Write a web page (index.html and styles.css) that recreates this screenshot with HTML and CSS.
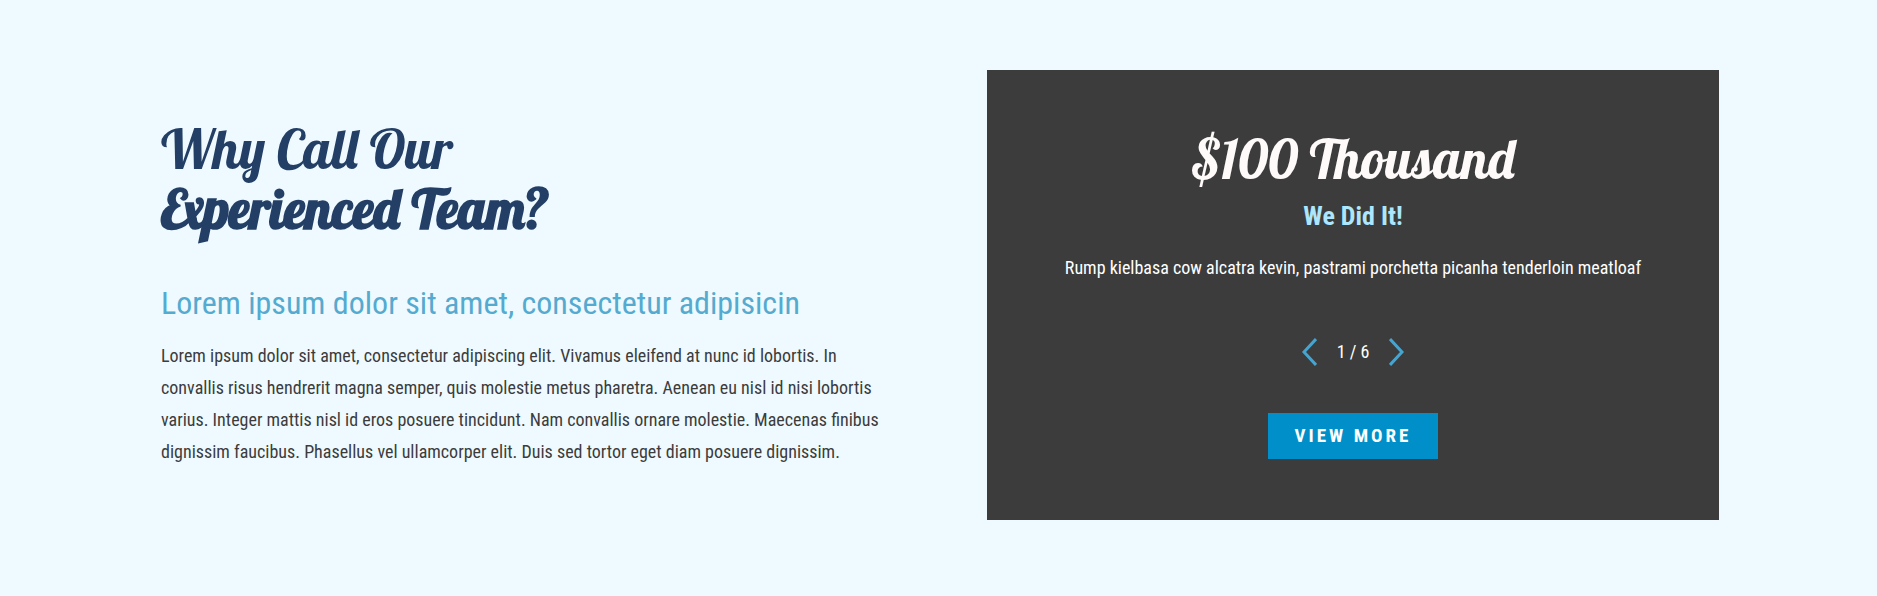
FILE: index.html
```html
<!DOCTYPE html>
<html lang="en">
<head>
<meta charset="utf-8">
<meta name="viewport" content="width=device-width, initial-scale=1">
<title>Why Call Our Experienced Team?</title>
<link rel="stylesheet" href="styles.css">
</head>
<body>
<main class="section">
  <section class="intro">
    <h2 class="script intro-title">Why Call Our<br><strong>Experienced Team?</strong></h2>
    <h3 class="intro-subtitle">Lorem ipsum dolor sit amet, consectetur adipisicin</h3>
    <p class="intro-text">Lorem ipsum dolor sit amet, consectetur adipiscing elit. Vivamus eleifend at nunc id lobortis. In convallis risus hendrerit magna semper, quis molestie metus pharetra. Aenean eu nisl id nisi lobortis varius. Integer mattis nisl id eros posuere tincidunt. Nam convallis ornare molestie. Maecenas finibus dignissim faucibus. Phasellus vel ullamcorper elit. Duis sed tortor eget diam posuere dignissim.</p>
  </section>
  <section class="card">
    <h2 class="script card-title">$100 Thousand</h2>
    <h3 class="card-subtitle">We Did It!</h3>
    <p class="card-text">Rump kielbasa cow alcatra kevin, pastrami porchetta picanha tenderloin meatloaf</p>
    <nav class="pager" aria-label="Results">
      <button class="arrow" type="button" aria-label="Previous"><svg width="15" height="28" viewBox="0 0 15 28"><path d="M14 1 2 14l12 13"/></svg></button>
      <span class="count">1 / 6</span>
      <button class="arrow" type="button" aria-label="Next"><svg width="15" height="28" viewBox="0 0 15 28"><path d="m1 1 12 13L1 27"/></svg></button>
    </nav>
    <a class="more" href="#">View More</a>
  </section>
</main>
</body>
</html>
```

FILE: styles.css
```css
* { box-sizing: border-box; }

body {
  margin: 0;
  background: #eefaff;
  color: #3c3c3c;
  font-family: "Roboto Condensed", "Liberation Sans Narrow", "Open Sans Condensed", Roboto, sans-serif;
  font-size: 18px;
}

h2, h3, p { margin: 0; }

.section {
  display: grid;
  grid-template-columns: 1fr 1fr;
  gap: 97px;
  align-items: center;
  max-width: 1561px;
  margin: 0 auto;
  padding: 70px 0 76px;
}

.script {
  font-family: Lobster, "Liberation Serif", serif;
  font-weight: 400;
  font-size: 54px;
  line-height: 60px;
}

.script strong { font-weight: 700; }

.intro { padding: 0 0 4px 3px; }

.intro-title {
  margin-bottom: 44px;
  color: #243f66;
}

.intro-subtitle {
  margin-bottom: 17px;
  color: #55aacf;
  font-size: 32px;
  font-weight: 400;
  line-height: 40px;
}

.intro-text { line-height: 32px; }

.card {
  display: flex;
  flex-direction: column;
  align-items: center;
  padding: 59px 32px 60px;
  background: #3c3c3c;
  color: #fff;
  text-align: center;
}

.card-title { color: #fffafa; }

.card-subtitle {
  margin-top: 9px;
  color: #ade6ff;
  font-size: 26px;
  font-weight: 700;
  line-height: 36px;
}

.card-text {
  margin-top: 20px;
  line-height: 28px;
}

.pager {
  display: flex;
  align-items: center;
  gap: 20px;
  margin-top: 56px;
}

.arrow {
  display: flex;
  padding: 0;
  border: 0;
  background: none;
  cursor: pointer;
}

.arrow path {
  fill: none;
  stroke: #45a5d0;
  stroke-width: 3;
}

.count { line-height: 28px; }

.more {
  margin: 47px 0 1px;
  padding: 0 27px;
  background: #008fc8;
  color: #fff;
  font-size: 19px;
  font-weight: 700;
  line-height: 46px;
  letter-spacing: 3px;
  text-decoration: none;
  text-transform: uppercase;
}
```
